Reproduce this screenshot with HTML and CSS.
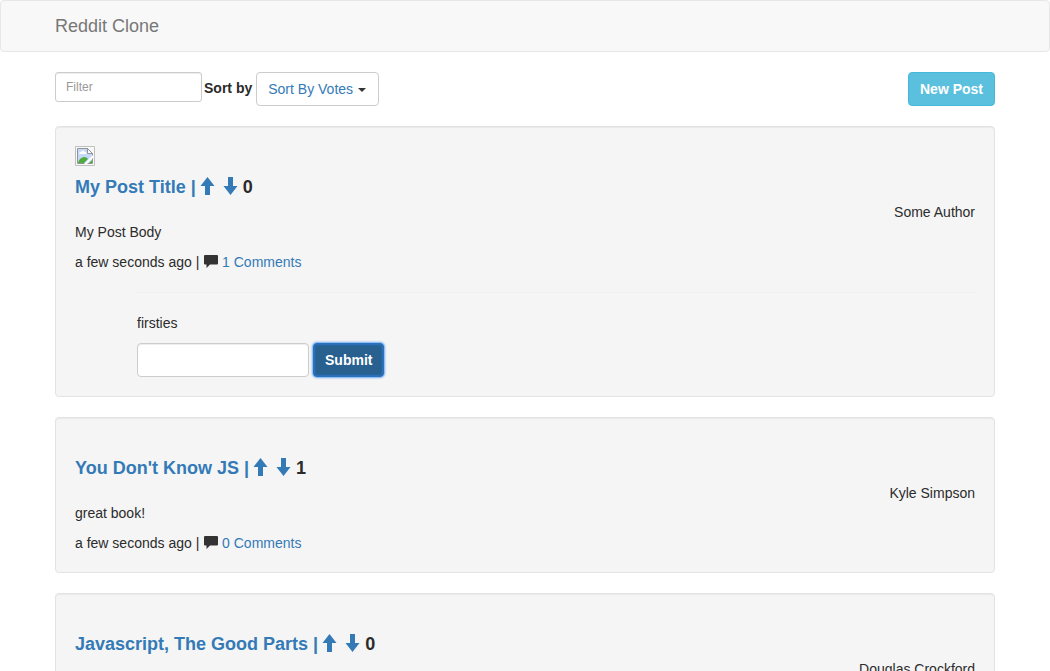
FILE: index.html
```html
<!DOCTYPE html>
<html lang="en">
<head>
<meta charset="utf-8">
<title>Reddit Clone</title>
<link rel="stylesheet" href="styles.css">
</head>
<body>
<svg class="sprite" aria-hidden="true">
  <symbol id="up" viewBox="0 0 14 18"><path d="M7 0L14 9H9.500V18H4.500V9H0Z"/></symbol>
  <symbol id="down" viewBox="0 0 14 18"><path d="M7 18L0 9H4.500V0H9.500V9H14Z"/></symbol>
  <symbol id="comment" viewBox="0 0 14 14"><path d="M1 0H13Q14 0 14 1V8.500Q14 9.500 13 9.500H6L2.500 13V9.500H1Q0 9.500 0 8.500V1Q0 0 1 0Z"/></symbol>
</svg>
<nav class="navbar">
  <div class="container"><a class="brand" href="#">Reddit Clone</a></div>
</nav>
<main class="container">
  <div class="toolbar">
    <input class="field field-small" type="text" placeholder="Filter" aria-label="Filter">
    <label class="sort-label" for="sort">Sort by</label>
    <div class="sort">
      <select class="sort-select" id="sort"><option>Sort By Votes</option></select>
      <span class="caret"></span>
    </div>
    <button class="button button-info" type="button">New Post</button>
  </div>

  <article class="post">
    <svg class="thumb" viewBox="0 0 20 20" role="img" aria-label="Missing picture">
      <path d="M.5 .5H19.500V19.500H.5Z" fill="#f8f8f8" stroke="#c0c0c0"/>
      <path d="M2.500 2.500H12.500L17.500 7.500V17.500H2.500Z" fill="#c6d9fa" stroke="#949494"/>
      <path d="M4 8Q4 6 6 6Q8 3 10 6Q12 6 11.500 8Z" fill="#fff"/>
      <path d="M3 17Q4 12 9 11Q12 11 13 13L9 17Z" fill="#4fac3c"/>
      <path d="M14 17L17 14V17Z" fill="#4fac3c"/>
      <path d="M9 18L18 9V12L12 18Z" fill="#fff"/>
      <path d="M12.500 2.500V7.500H17.500Z" fill="#fff" stroke="#949494"/>
    </svg>
    <h4 class="title">
      <a href="#">My Post Title |</a>
      <button class="vote" type="button" aria-label="Upvote"><svg class="arrow"><use href="#up"/></svg></button>
      <button class="vote" type="button" aria-label="Downvote"><svg class="arrow"><use href="#down"/></svg></button>
      <span class="score">0</span>
    </h4>
    <p class="author">Some Author</p>
    <p class="text">My Post Body</p>
    <p class="meta">a few seconds ago | <svg class="bubble"><use href="#comment"/></svg> <a href="#">1 Comments</a></p>
    <section class="comments">
      <p class="text">firsties</p>
      <form class="reply">
        <input class="field" type="text" aria-label="Comment">
        <button class="button button-primary" type="button">Submit</button>
      </form>
    </section>
  </article>

  <article class="post post-plain">
    <h4 class="title">
      <a href="#">You Don't Know JS |</a>
      <button class="vote" type="button" aria-label="Upvote"><svg class="arrow"><use href="#up"/></svg></button>
      <button class="vote" type="button" aria-label="Downvote"><svg class="arrow"><use href="#down"/></svg></button>
      <span class="score">1</span>
    </h4>
    <p class="author">Kyle Simpson</p>
    <p class="text">great book!</p>
    <p class="meta">a few seconds ago | <svg class="bubble"><use href="#comment"/></svg> <a href="#">0 Comments</a></p>
  </article>

  <article class="post post-plain">
    <h4 class="title">
      <a href="#">Javascript, The Good Parts |</a>
      <button class="vote" type="button" aria-label="Upvote"><svg class="arrow"><use href="#up"/></svg></button>
      <button class="vote" type="button" aria-label="Downvote"><svg class="arrow"><use href="#down"/></svg></button>
      <span class="score">0</span>
    </h4>
    <p class="author">Douglas Crockford</p>
  </article>
</main>
</body>
</html>
```

FILE: styles.css
```css
* { box-sizing: border-box; }
body {
  margin: 0;
  background: #fff;
  color: #2b2b2b;
  font: 14px/20px "Liberation Sans", Arial, sans-serif;
}
a { color: #337ab7; text-decoration: none; }
p, h4 { margin: 0; }
button, input, select { font: inherit; }
.sprite { display: none; }
.container { max-width: 970px; margin: 0 auto; padding: 0 15px; }

.navbar {
  margin-bottom: 20px;
  padding: 15px 0;
  border: 1px solid #e7e7e7;
  border-radius: 4px;
  background: #f8f8f8;
}
.brand { display: block; color: #777; font-size: 18px; }

.toolbar { display: flex; align-items: flex-start; margin-bottom: 20px; }
.field {
  width: 172px;
  height: 34px;
  padding: 6px 12px;
  border: 1px solid #ccc;
  border-radius: 4px;
  background: #fff;
  box-shadow: inset 0 1px 1px rgba(0, 0, 0, .075);
}
.field::placeholder { color: #999; }
.field-small { width: 147px; height: 30px; padding: 5px 10px; border-radius: 3px; font-size: 12px; }
.sort-label { margin: 6px 4px 0 2px; font-weight: bold; }
.sort { position: relative; }
.sort-select {
  width: 123px;
  height: 34px;
  padding: 0 11px;
  border: 1px solid #ccc;
  border-radius: 4px;
  background: #fff;
  color: #337ab7;
  appearance: none;
}
.caret {
  position: absolute;
  top: 16px;
  right: 13px;
  border: 4px solid transparent;
  border-top-color: #333;
  border-bottom: 0;
  pointer-events: none;
}
.button {
  height: 34px;
  padding: 0 11px;
  border: 1px solid;
  border-radius: 4px;
  color: #fff;
  font-weight: bold;
}
.button-info { margin-left: auto; border-color: #46b8da; background: #5bc0de; }
.button-primary {
  border-color: #2a72bd;
  background: #286090;
  box-shadow: 0 0 2px 1px #6aabf5, inset 0 0 2px 1px #2d75c4;
}

.post {
  margin-bottom: 20px;
  padding: 19px;
  border: 1px solid #e3e3e3;
  border-radius: 4px;
  background: #f5f5f5;
  box-shadow: inset 0 1px 1px rgba(0, 0, 0, .05);
}
.post-plain { padding-top: 40px; }
.thumb { display: block; width: 20px; height: 20px; margin-bottom: 11px; }
.title { display: flex; height: 20px; font-size: 18px; margin-bottom: 5px; }
.vote { display: flex; padding: 0; border: 0; background: none; color: #337ab7; }
.vote { margin-left: 8px; }
.title a + .vote { margin-left: 4px; }
.arrow { width: 15px; height: 18px; fill: currentColor; }
.score { margin-left: 5px; }
.author { text-align: right; }
.meta { margin-top: 10px; }
.bubble { width: 14px; height: 14px; margin-left: 1px; fill: #333; vertical-align: -2px; }
.comments { margin: 20px 0 0 62px; padding-top: 20px; border-top: 1px solid #eee; }
.reply { display: flex; gap: 4px; margin-top: 10px; }
```
